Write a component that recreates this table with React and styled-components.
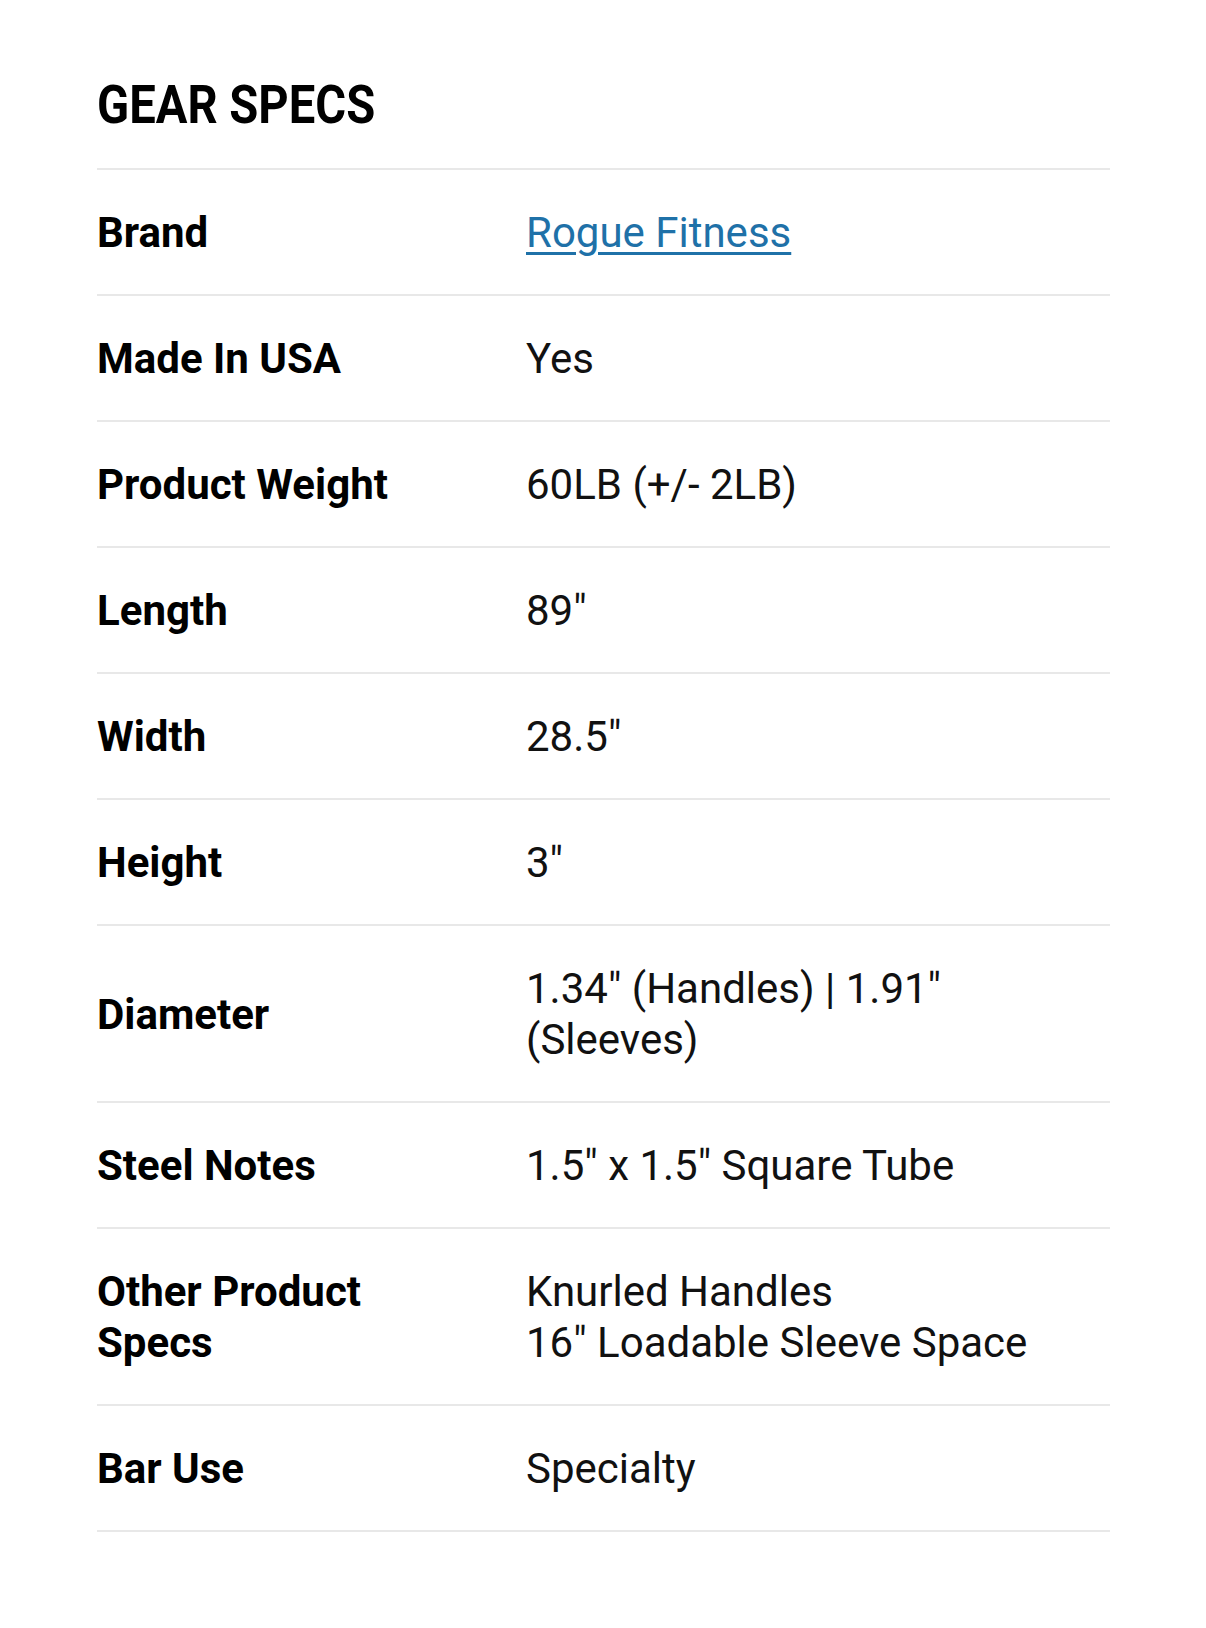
import React from 'react'
import styled, { createGlobalStyle } from 'styled-components'

const GlobalStyle = createGlobalStyle`
  body {
    margin: 0;
    background: #fff;
    font-family: Roboto, "Noto Sans", Arial, sans-serif;
    color: #000;
  }
`;

const Page = styled.div`
  padding: 73px 96px 100px 97px;
`;

const Title = styled.h2`
  margin: 0 0 31px;
  font-size: 53px;
  line-height: 64px;
  font-weight: 700;
  text-transform: uppercase;
  transform: scaleX(0.89);
  transform-origin: left center;
  white-space: nowrap;
`;

const Table = styled.div`
  border-top: 2px solid #e8e8e8;
`;

const Row = styled.div`
  display: grid;
  grid-template-columns: 429px 1fr;
  align-items: center;
  padding: 37px 0 36px;
  border-bottom: 2px solid #e8e8e8;
  font-size: 42px;
  line-height: 51px;
`;

const Label = styled.div`
  font-weight: 700;
  color: #000;
  padding-right: 40px;
`;

const Value = styled.div`
  font-weight: 400;
  color: #111;
`;

const Link = styled.a`
  color: #1f71a8;
  text-decoration: underline;
  text-underline-offset: 5px;
  text-decoration-thickness: 3px;
`;

const specs = [
  { label: 'Brand', value: <Link href="#">Rogue Fitness</Link> },
  { label: 'Made In USA', value: 'Yes' },
  { label: 'Product Weight', value: '60LB (+/- 2LB)' },
  { label: 'Length', value: '89"' },
  { label: 'Width', value: '28.5"' },
  { label: 'Height', value: '3"' },
  { label: 'Diameter', value: <>1.34" (Handles) | 1.91"<br />(Sleeves)</> },
  { label: 'Steel Notes', value: '1.5" x 1.5" Square Tube' },
  { label: <>Other Product<br />Specs</>, value: <>Knurled Handles<br />16" Loadable Sleeve Space</> },
  { label: 'Bar Use', value: 'Specialty' },
];

export default function App() {
  return (
    <>
      <GlobalStyle />
      <Page>
        <Title>Gear Specs</Title>
        <Table>
          {specs.map((s, i) => (
            <Row key={i}>
              <Label>{s.label}</Label>
              <Value>{s.value}</Value>
            </Row>
          ))}
        </Table>
      </Page>
    </>
  )
}
